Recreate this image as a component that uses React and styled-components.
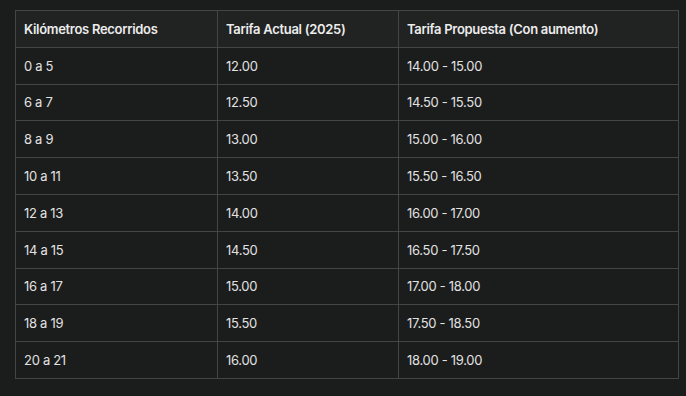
import React from "react";
import styled, { createGlobalStyle } from "styled-components";

const Global = createGlobalStyle`
  html, body { margin: 0; padding: 0; background: #1b1c1c; }
  body { font-family: Inter, "Noto Sans", sans-serif; color: #e6e6e6; }
`;

const Page = styled.div`
  padding: 10px 9px 0 15px;
`;

const Table = styled.table`
  border-collapse: collapse;
  width: 663px;
  table-layout: fixed;
  font-size: 13px;
  letter-spacing: -0.3px;
`;

const Th = styled.th`
  background: #212222;
  border: 1px solid #444545;
  text-align: left;
  font-weight: 600;
  height: 36.8px;
  padding: 0 7px 0 8px;
  box-sizing: border-box;
  color: #ececec;
  width: ${(p) => p.$w}px;
`;

const Td = styled.td`
  border: 1px solid #444545;
  height: 36.8px;
  padding: 0 7px 0 8px;
  box-sizing: border-box;
  font-weight: 400;
  color: #e2e2e2;
`;

const rows = [
  ["0 a 5", "12.00", "14.00 - 15.00"],
  ["6 a 7", "12.50", "14.50 - 15.50"],
  ["8 a 9", "13.00", "15.00 - 16.00"],
  ["10 a 11", "13.50", "15.50 - 16.50"],
  ["12 a 13", "14.00", "16.00 - 17.00"],
  ["14 a 15", "14.50", "16.50 - 17.50"],
  ["16 a 17", "15.00", "17.00 - 18.00"],
  ["18 a 19", "15.50", "17.50 - 18.50"],
  ["20 a 21", "16.00", "18.00 - 19.00"],
];

export default function App() {
  return (
    <Page>
      <Global />
      <Table>
        <thead>
          <tr>
            <Th $w={202}>Kilómetros Recorridos</Th>
            <Th $w={181}>Tarifa Actual (2025)</Th>
            <Th $w={280}>Tarifa Propuesta (Con aumento)</Th>
          </tr>
        </thead>
        <tbody>
          {rows.map((r) => (
            <tr key={r[0]}>
              {r.map((c, i) => (
                <Td key={i}>{c}</Td>
              ))}
            </tr>
          ))}
        </tbody>
      </Table>
    </Page>
  );
}
